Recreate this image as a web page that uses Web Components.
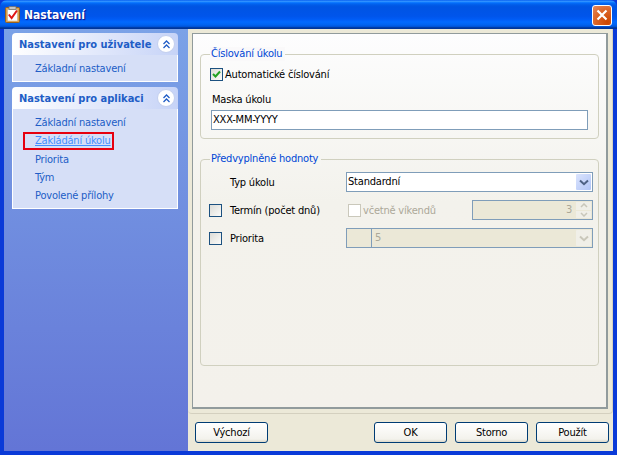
<!DOCTYPE html>
<html>
<head>
<meta charset="utf-8">
<title>Nastavení</title>
<style>
  html, body { margin: 0; padding: 0; background: #0a3ad8; }
  body { width: 617px; height: 455px; overflow: hidden; font: 11px "DejaVu Sans Condensed", "Liberation Sans", sans-serif; letter-spacing: -.2px; color: #000; }
</style>
</head>
<body>

<x-window heading="Nastavení">
  <x-task-pane slot="side">
    <x-task-group heading="Nastavení pro uživatele">
      <x-task-link>Základní nastavení</x-task-link>
    </x-task-group>
    <x-task-group heading="Nastavení pro aplikaci">
      <x-task-link>Základní nastavení</x-task-link>
      <x-task-link active>Zakládání úkolu</x-task-link>
      <x-task-link>Priorita</x-task-link>
      <x-task-link>Tým</x-task-link>
      <x-task-link>Povolené přílohy</x-task-link>
    </x-task-group>
  </x-task-pane>

  <x-group-box heading="Číslování úkolu" style="height:85px; margin-bottom:20px; --legend-bg:#faf9fa">
    <x-numbering></x-numbering>
  </x-group-box>
  <x-group-box heading="Předvyplněné hodnoty" style="height:207px; --legend-bg:#f6f5f1">
    <x-defaults></x-defaults>
  </x-group-box>

  <x-button slot="left">Výchozí</x-button>
  <x-button slot="right">OK</x-button>
  <x-button slot="right">Storno</x-button>
  <x-button slot="right">Použít</x-button>
</x-window>

<script>
// small helper, every element is just a template + shadow root
function shadow(el, html) {
  let root = el.attachShadow({mode: 'open'});
  root.innerHTML = html;
  return root;
}

class XWindow extends HTMLElement {
  constructor() {
    super();
    shadow(this, `
    <style>
      :host { display: flex; flex-direction: column; width: 617px; height: 455px; }
      .title {
        flex: 0 0 29px; display: flex; align-items: center; padding: 0 5px 0 5px;
        border-radius: 7px 7px 0 0; box-sizing: border-box;
        background: linear-gradient(to bottom, #0058ee 0%, #3593ff 4%, #288eff 6%, #127dff 8%, #036ffc 10%,
          #0262ee 14%, #0057e5 20%, #0054e3 24%, #0055eb 56%, #005bf5 66%, #026afe 76%, #0062ef 86%,
          #0052d6 92%, #0040ab 94%, #003092 100%);
      }
      .title svg.icon { flex: none; margin-right: 4px; }
      .title b { flex: 1; font: bold 12px "DejaVu Sans Condensed", "Liberation Sans", sans-serif; letter-spacing: 0; color: #fff; text-shadow: 1px 1px 1px #0f1089; }
      .close {
        width: 20px; height: 21px; box-sizing: border-box; border: 1px solid #fff; border-radius: 3px; margin-top: 1px;
        background: radial-gradient(circle at 80% 85%, #cc4600 0, #dc6527 55%, #e58a5f 100%);
        display: flex; align-items: center; justify-content: center;
      }
      .frame {
        flex: 1; min-height: 0; display: flex;
        border: solid #0a3ad8; border-width: 0 4px 4px 4px;
      }
      .side { flex: 0 0 184px; background: linear-gradient(to bottom, #7ba2e7, #6375d6); }
      .content { flex: 1; min-width: 0; display: flex; flex-direction: column; background: #ece9d8; }
      .tabs {
        height: 385px; box-sizing: border-box; padding: 4px 4px 0 4px;
        border: solid #d4d0bf; border-width: 0 1px 1px 0; border-radius: 0 0 4px 4px;
      }
      .page {
        height: 376px; box-sizing: border-box; padding: 20px 7px 0 7px;
        border: 1px solid #919b9c; border-bottom-width: 2px; border-right-width: 2px;
        background: linear-gradient(to bottom, #fdfdfe, #f3f2ec 45%, #f3f1eb);
      }
      .buttons { flex: 1; display: flex; justify-content: space-between; align-items: flex-start; padding: 8px 4px 0 7px; }
      .right { display: flex; gap: 8px; }
    </style>
    <div class="title">
      <svg class="icon" width="15" height="17" viewBox="0 0 15 17">
        <rect x="0.5" y="1.5" width="14" height="15" rx="1" fill="#dda04a" stroke="#96611f"/>
        <rect x="2.5" y="3.5" width="10" height="11.5" fill="#fff" stroke="#c7b08a" stroke-width=".6"/>
        <rect x="4" y="0.5" width="7" height="3" fill="#c4c4c4" stroke="#6e6e6e" stroke-width=".7"/>
        <path d="M3.8 8.5 L6.6 12 L12 4.5" fill="none" stroke="#e01616" stroke-width="2"/>
      </svg>
      <b></b>
      <div class="close">
        <svg width="12" height="12" viewBox="0 0 12 12"><path d="M1.5 1.5 L10.5 10.5 M10.5 1.5 L1.5 10.5" stroke="#fff" stroke-width="2.2"/></svg>
      </div>
    </div>
    <div class="frame">
      <div class="side"><slot name="side"></slot></div>
      <div class="content">
        <div class="tabs"><div class="page"><slot></slot></div></div>
        <div class="buttons">
          <div><slot name="left"></slot></div>
          <div class="right"><slot name="right"></slot></div>
        </div>
      </div>
    </div>
    `);
    this.shadowRoot.querySelector('b').textContent = this.getAttribute('heading');
  }
}

class XTaskPane extends HTMLElement {
  constructor() {
    super();
    shadow(this, `
    <style>
      :host { display: flex; flex-direction: column; gap: 4.75px; padding: 4px 10px 0 8px; }
    </style>
    <slot></slot>
    `);
  }
}

class XTaskGroup extends HTMLElement {
  constructor() {
    super();
    shadow(this, `
    <style>
      :host { display: block; }
      .head {
        height: 22px; display: flex; align-items: center; justify-content: space-between;
        padding: 0 3px 0 7px; border-radius: 4px 4px 0 0;
        background: linear-gradient(to right, #fff, #c6d3f7);
        font: bold 11px "DejaVu Sans Condensed", "Liberation Sans", sans-serif; letter-spacing: 0; color: #215dc6;
      }
      .chev { width: 18px; height: 18px; border-radius: 50%; background: #fff; border: 1px solid #c3cfee; box-sizing: border-box;
        display: flex; align-items: center; justify-content: center; }
      .body { background: #d6dff7; border: 1px solid #fff; border-top: 0; padding: 5px 0 3px 22px; }
    </style>
    <div class="head"><span></span>
      <div class="chev"><svg width="9" height="9" viewBox="0 0 9 9"><path d="M1.5 4 L4.5 1 L7.5 4 M1.5 8 L4.5 5 L7.5 8" fill="none" stroke="#215dc6" stroke-width="1.3"/></svg></div>
    </div>
    <div class="body"><slot></slot></div>
    `);
    this.shadowRoot.querySelector('span').textContent = this.getAttribute('heading');
  }
}

class XTaskLink extends HTMLElement {
  constructor() {
    super();
    shadow(this, `
    <style>
      :host { display: block; height: 18.25px; color: #215dc6; line-height: 18px; }
      :host([active]) { color: #428eff; text-decoration: underline; position: relative; }
      :host([active])::after { content: ""; position: absolute; left: -12px; top: 0; width: 91px; height: 18px; box-sizing: border-box; border: 2px solid #e6000f; }
    </style>
    <slot></slot>
    `);
  }
}

class XGroupBox extends HTMLElement {
  constructor() {
    super();
    shadow(this, `
    <style>
      :host { display: block; box-sizing: border-box; border: 1px solid #d0d0bf; border-radius: 4px; padding: 0 6px 0 8px; }
      .legend { display: table; margin: -8px 0 0 1px; padding: 0 3px 0 1px; height: 14px; line-height: 14px;
        background: var(--legend-bg); color: #0046d5; }
    </style>
    <div class="legend"></div>
    <slot></slot>
    `);
    this.shadowRoot.querySelector('.legend').textContent = this.getAttribute('heading');
  }
}

class XCheck extends HTMLElement {
  constructor() {
    super();
    shadow(this, `
    <style>
      :host { display: inline-flex; align-items: center; gap: 2px; height: 13px; line-height: 13px; }
      .box { width: 13px; height: 13px; box-sizing: border-box; border: 1px solid #1c5180;
        background: linear-gradient(135deg, #dcdcd7, #fbfbf8); display: block; flex: none; }
      :host([disabled]) { color: #aca899; }
      :host([disabled]) .box { border-color: #cac8bb; background: #fff; }
    </style>
    <span class="box"></span><slot></slot>
    `);
    if (this.hasAttribute('checked')) {
      this.shadowRoot.querySelector('.box').innerHTML =
        '<svg width="11" height="11" viewBox="0 0 11 11" style="display:block"><path d="M2 5 L4.5 7.5 L9 2.5" fill="none" stroke="#21a121" stroke-width="2"/></svg>';
    }
  }
}

class XTextBox extends HTMLElement {
  constructor() {
    super();
    shadow(this, `
    <style>
      :host { display: block; height: 20px; box-sizing: border-box; border: 1px solid #7f9db9; background: #fff;
        padding-left: 1px; line-height: 18px; }
    </style>
    <slot></slot>
    `);
  }
}

class XCombo extends HTMLElement {
  constructor() {
    super();
    shadow(this, `
    <style>
      :host { display: flex; height: 20px; box-sizing: border-box; border: 1px solid #7f9db9; background: #fff; line-height: 18px; }
      .gutter { display: none; }
      .text { flex: 1; padding-left: 1px; }
      .btn { flex: 0 0 15px; margin: 1px; border-radius: 1px; background: linear-gradient(135deg, #dbe4fd, #b1c5f7);
        display: flex; align-items: center; justify-content: center; }
      :host([disabled]) { background: #ebe8d7; color: #aca899; }
      :host([disabled]) .gutter { display: block; flex: 0 0 24px; border-right: 1px solid #7f9db9; }
      :host([disabled]) .text { padding-left: 3px; }
      :host([disabled]) .btn { background: #f0efe8; }
      :host([disabled]) path { stroke: #c9c7ba; }
    </style>
    <span class="gutter"></span><span class="text"><slot></slot></span>
    <span class="btn"><svg width="10" height="7" viewBox="0 0 10 7"><path d="M1 1.5 L5 5.2 L9 1.5" fill="none" stroke="#4d6185" stroke-width="2"/></svg></span>
    `);
  }
}

class XSpin extends HTMLElement {
  constructor() {
    super();
    shadow(this, `
    <style>
      :host { display: flex; height: 20px; box-sizing: border-box; border: 1px solid #7f9db9; background: #ebe8d7; color: #aca899; line-height: 18px; }
      .text { flex: 1; text-align: right; padding-right: 3px; }
      .arrows { flex: 0 0 15px; margin: 1px; display: flex; flex-direction: column; gap: 1px; }
      .arrows span { flex: 1; background: #f0efe8; display: flex; align-items: center; justify-content: center; }
    </style>
    <span class="text"><slot></slot></span>
    <span class="arrows">
      <span><svg width="8" height="5" viewBox="0 0 8 5"><path d="M1 4 L4 1 L7 4" fill="none" stroke="#c9c7ba" stroke-width="1.5"/></svg></span>
      <span><svg width="8" height="5" viewBox="0 0 8 5"><path d="M1 1 L4 4 L7 1" fill="none" stroke="#c9c7ba" stroke-width="1.5"/></svg></span>
    </span>
    `);
  }
}

class XButton extends HTMLElement {
  constructor() {
    super();
    shadow(this, `
    <style>
      :host { display: block; width: 73px; height: 21px; box-sizing: border-box; border: 1px solid #003c74; border-radius: 3px;
        background: linear-gradient(to bottom, #fff, #f3f2ec 85%, #dcd8c8); text-align: center; line-height: 19px; }
    </style>
    <slot></slot>
    `);
  }
}

class XNumbering extends HTMLElement {
  constructor() {
    super();
    shadow(this, `
    <style>
      :host { display: flex; flex-direction: column; padding-top: 7px; }
      .check { height: 13px; margin-left: 1px; }
      .label { margin: 12px 0 3px 3px; line-height: 14px; }
      x-text-box { margin: 0 4px 0 2px; }
    </style>
    <div class="check"><x-check checked>Automatické číslování</x-check></div>
    <div class="label">Maska úkolu</div>
    <x-text-box>XXX-MM-YYYY</x-text-box>
    `);
  }
}

class XDefaults extends HTMLElement {
  constructor() {
    super();
    shadow(this, `
    <style>
      :host { display: grid; grid-template-columns: 21px 116px 126px 121px; grid-auto-rows: 20px; row-gap: 8px; padding-top: 6px; align-items: center; }
      .wide { grid-column: 3 / 5; }
      x-check.dis { padding-left: 2px; }
    </style>
    <span></span><span>Typ úkolu</span><x-combo class="wide">Standardní</x-combo>
    <x-check></x-check><span>Termín (počet dnů)</span><x-check class="dis" disabled>včetně víkendů</x-check><x-spin>3</x-spin>
    <x-check></x-check><span>Priorita</span><x-combo class="wide" disabled>5</x-combo>
    `);
  }
}

customElements.define('x-window', XWindow);
customElements.define('x-task-pane', XTaskPane);
customElements.define('x-task-group', XTaskGroup);
customElements.define('x-task-link', XTaskLink);
customElements.define('x-group-box', XGroupBox);
customElements.define('x-check', XCheck);
customElements.define('x-text-box', XTextBox);
customElements.define('x-combo', XCombo);
customElements.define('x-spin', XSpin);
customElements.define('x-button', XButton);
customElements.define('x-numbering', XNumbering);
customElements.define('x-defaults', XDefaults);
</script>
</body>
</html>
